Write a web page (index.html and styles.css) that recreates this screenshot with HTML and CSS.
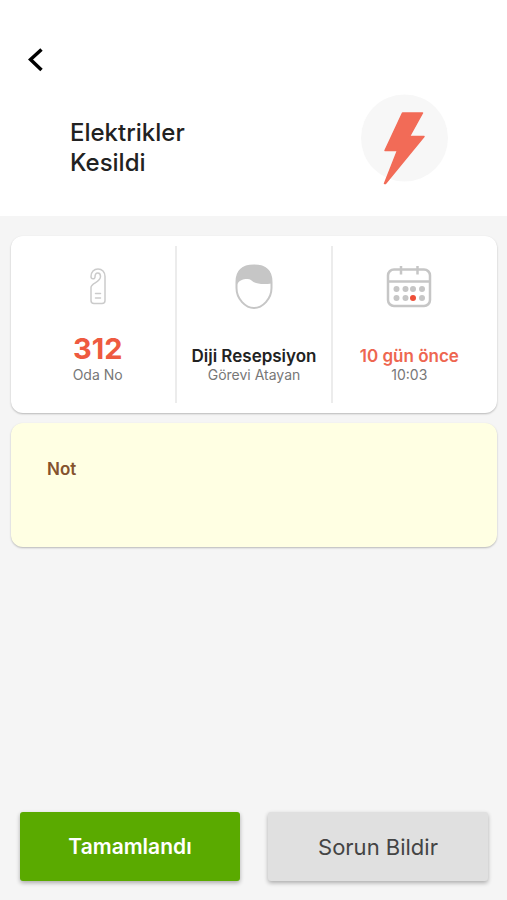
FILE: index.html
```html
<!DOCTYPE html>
<html lang="tr">
<head>
  <meta charset="UTF-8">
  <meta name="viewport" content="width=device-width, initial-scale=1">
  <title>Elektrikler Kesildi</title>
  <link rel="stylesheet" href="styles.css">
</head>
<body>

<header class="header">
  <button type="button" class="back" aria-label="Geri">
    <svg width="16" height="24" viewBox="0 0 16 24">
      <path d="M13.500 1.500L2.500 11.500l11 10.500" fill="none" stroke="#000" stroke-width="3.500"/>
    </svg>
  </button>
  <div class="headline">
    <h1>Elektrikler<br>Kesildi</h1>
    <!-- şimşek -->
    <svg class="bolt" width="88" height="92" viewBox="0 0 88 92">
      <circle cx="44.500" cy="44" r="43.500" fill="#f7f7f7"/>
      <path d="M42.500 19h20L49.500 42.500H64L25.500 89.500h-1L37.500 56.500H25z" fill="#f26b57" stroke="#f26b57" stroke-width="1.500" stroke-linejoin="round"/>
    </svg>
  </div>
</header>

<main class="content">
  <section class="card info">
    <div class="cell">
      <div class="icon">
        <!-- kapı askısı -->
        <svg width="18" height="40" viewBox="0 0 18 40" fill="none" stroke="#cbcbcb" stroke-width="1.500" stroke-linecap="round" stroke-linejoin="round">
          <path d="M2 9.500C2 5 5 2 9 2s7 3 7 7.500V33.500a3 3 0 0 1-3 3H5a3 3 0 0 1-3-3V20.500c0-4.500 9.500-5 9.500-11 0-2-1-3.500-2.700-3.500S6 7.500 6 10c0 2.500-4 2.500-4-.5z"/>
          <path d="M6.500 26.500h5M6.500 31h5"/>
        </svg>
      </div>
      <strong class="value room">312</strong>
      <span class="label">Oda No</span>
    </div>
    <div class="cell">
      <div class="icon">
        <!-- yüz -->
        <svg width="38" height="46" viewBox="0 0 38 46">
          <path d="M1.500 18C1.500 7 8 1.500 19 1.500S36.500 7 36.500 18v6c0 11-9 20-17.500 20S1.500 35 1.500 24z" fill="#fff" stroke="#c6c6c6" stroke-width="2"/>
          <path d="M1.500 22C0 6 8 1 19 1s19 5 17.500 18.500c-6 .8-14 1-18-1.500-2-1.500-3-3-6-3-5 0-9 1.500-11 7z" fill="#c6c6c6"/>
        </svg>
      </div>
      <strong class="value">Diji Resepsiyon</strong>
      <span class="label">Görevi Atayan</span>
    </div>
    <div class="cell">
      <div class="icon">
        <!-- takvim -->
        <svg width="46" height="42" viewBox="0 0 46 42">
          <g fill="none" stroke="#c6c6c6" stroke-width="2.500">
            <rect x="2" y="3.500" width="42" height="36.500" rx="6"/>
            <path d="M2 15.500h42M15 0v8.500M31.500 0v8.500"/>
          </g>
          <g fill="#c6c6c6">
            <circle cx="10.500" cy="23" r="3"/>
            <circle cx="19.500" cy="23" r="3"/>
            <circle cx="27" cy="23" r="3"/>
            <circle cx="36" cy="23" r="3"/>
            <circle cx="10.500" cy="32" r="3"/>
            <circle cx="19.500" cy="32" r="3"/>
            <circle cx="36" cy="32" r="3"/>
          </g>
          <circle cx="27" cy="32" r="3" fill="#ee4f38"/>
        </svg>
      </div>
      <strong class="value time">10 gün önce</strong>
      <span class="label">10:03</span>
    </div>
  </section>

  <section class="card note">
    <h2>Not</h2>
  </section>
</main>

<footer class="actions">
  <button type="button" class="btn done">Tamamlandı</button>
  <button type="button" class="btn report">Sorun Bildir</button>
</footer>

</body>
</html>
```

FILE: styles.css
```css
* {
  margin: 0;
  padding: 0;
  box-sizing: border-box;
}

body {
  display: flex;
  flex-direction: column;
  min-height: 100vh;
  background: #f5f5f5;
  color: #222;
  font-family: Inter, "Liberation Sans", sans-serif;
}

button {
  border: none;
  font-family: inherit;
  cursor: pointer;
}

svg {
  display: block;
}

.header {
  padding: 48px 0 30px;
  background: #fff;
}

.back {
  display: block;
  margin-left: 28px;
  background: none;
}

.headline {
  display: flex;
  justify-content: space-between;
  margin-top: 22px;
  padding: 0 59px 0 70px;
}

.headline h1 {
  padding-top: 24px;
  font-size: 24px;
  line-height: 30px;
  font-weight: 500;
}

.content {
  display: flex;
  flex-direction: column;
  gap: 10px;
  padding: 20px 10px 20px 11px;
}

.card {
  border-radius: 12px;
  background: #fff;
  box-shadow: 0 1px 2px rgba(0, 0, 0, .25);
}

.info {
  display: grid;
  grid-template-columns: repeat(3, 1fr);
  padding: 10px 11px 10px 9px;
}

.cell {
  display: flex;
  flex-direction: column;
  align-items: center;
  height: 157px;
  text-align: center;
}

.cell + .cell {
  border-left: 2px solid #ececec;
}

.icon {
  display: flex;
  align-items: center;
  height: 82px;
}

.value {
  display: flex;
  align-items: flex-end;
  height: 38px;
  font-size: 17px;
  line-height: 20px;
  font-weight: 600;
}

.room {
  color: #ee5a40;
  font-size: 29px;
  line-height: 34px;
  font-weight: 700;
}

.time {
  color: #ee6650;
}

.label {
  color: #777;
  font-size: 14px;
  line-height: 18px;
}

.note {
  min-height: 124px;
  padding: 36px;
  background: #ffffe3;
}

.note h2 {
  color: #85532d;
  font-size: 17px;
  line-height: 20px;
  font-weight: 600;
}

.actions {
  display: flex;
  gap: 28px;
  margin-top: auto;
  padding: 0 19px 19px 20px;
}

.btn {
  flex: 1;
  height: 69px;
  border-radius: 3px;
  font-size: 22px;
  box-shadow: 0 2px 4px rgba(0, 0, 0, .3);
}

.done {
  background: #5aaa00;
  color: #fff;
  font-size: 21px;
  font-weight: 600;
}

.report {
  background: #e0e0e0;
  color: #444;
  font-weight: 400;
}
```
